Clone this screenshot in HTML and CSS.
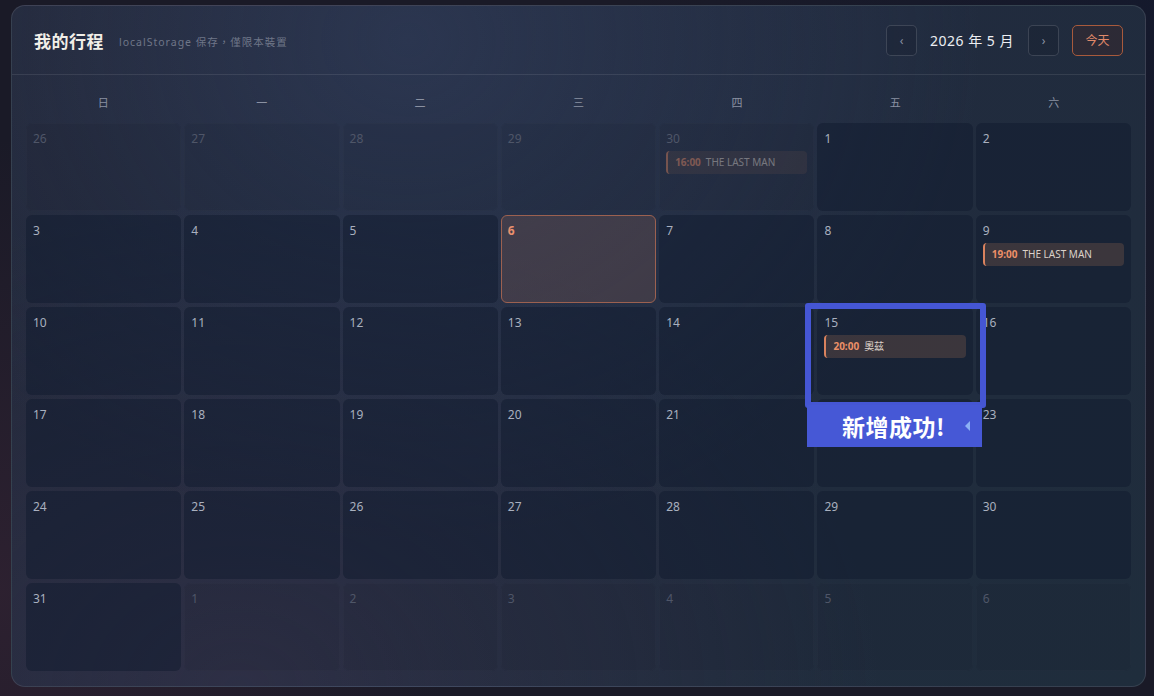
FILE: index.html
```html
<!DOCTYPE html>
<html lang="zh-Hant">
<head>
    <meta charset="UTF-8">
    <meta name="viewport" content="width=device-width, initial-scale=1.0">
    <title>我的行程</title>
    <link rel="stylesheet" href="styles.css">
</head>
<body>

    <div class="panel">
        <header class="top">
            <h1>我的行程</h1>
            <span class="sub">localStorage 保存，僅限本裝置</span>
            <div class="nav">
                <button class="nav-btn">‹</button>
                <span class="month">2026 年 5 月</span>
                <button class="nav-btn">›</button>
                <button class="today-btn">今天</button>
            </div>
        </header>

        <div class="weekdays">
            <div>日</div><div>一</div><div>二</div><div>三</div><div>四</div><div>五</div><div>六</div>
        </div>

        <div class="grid" id="grid"></div>
    </div>

    <!-- highlight + toast -->
    <div class="hl-box"></div>
    <div class="toast">新增成功!<span class="tri"></span></div>

    <script>
        var days = [];
        var prev = [26, 27, 28, 29, 30];
        var i;
        for (i = 0; i < prev.length; i++) days.push({ d: prev[i], other: true });
        for (i = 1; i <= 31; i++) days.push({ d: i });
        for (i = 1; i <= 6; i++) days.push({ d: i, other: true });

        var events = {
            4: ['16:00', 'THE LAST MAN'],
            13: ['19:00', 'THE LAST MAN'],
            19: ['20:00', '奧茲']
        };

        var grid = document.getElementById('grid');
        days.forEach(function (day, idx) {
            var cell = document.createElement('div');
            cell.className = 'cell';
            if (day.other) cell.className += ' other';
            if (!day.other && day.d === 6) cell.className += ' today';
            var html = '<div class="num">' + day.d + '</div>';
            if (events[idx]) {
                html += '<div class="chip"><b>' + events[idx][0] + '</b><span>' + events[idx][1] + '</span></div>';
            }
            cell.innerHTML = html;
            grid.appendChild(cell);
        });
    </script>

</body>
</html>
```

FILE: styles.css
```css
html, body {
    height: 100%;
}
body {
    margin: 0;
    padding: 5px 8px 9px 11px;
    box-sizing: border-box;
    font-family: "Noto Sans", "Noto Sans CJK TC", sans-serif;
    color: #c8cdd8;
    background:
        radial-gradient(circle at 0% 85%, rgba(80, 45, 65, 0.35), transparent 35%),
        radial-gradient(circle at 100% 0%, rgba(20, 25, 45, 0.9), transparent 40%),
        #1a1a27;
}
.panel {
    height: 682px;
    box-sizing: border-box;
    border: 1px solid rgba(255, 255, 255, 0.1);
    border-radius: 14px;
    background:
        radial-gradient(ellipse at 35% 5%, rgba(52, 66, 100, 0.5), transparent 55%),
        radial-gradient(ellipse at 20% 100%, rgba(60, 52, 78, 0.45), transparent 50%),
        linear-gradient(135deg, #232839 0%, #212b3e 50%, #1f2d3c 100%);
    overflow: hidden;
}
.top {
    height: 68px;
    display: flex;
    align-items: center;
    padding: 0 22px;
    border-bottom: 1px solid rgba(255, 255, 255, 0.09);
}
.top h1 {
    margin: 0;
    font-family: "Noto Sans CJK TC", sans-serif;
    font-size: 17px;
    font-weight: 700;
    color: #f2efe8;
    letter-spacing: 0.5px;
}
.sub {
    margin-left: 15px;
    margin-top: 3px;
    font-size: 10.5px;
    letter-spacing: 1px;
    color: #6f7688;
}
.nav {
    margin-left: auto;
    display: flex;
    align-items: center;
}
.nav-btn {
    width: 31px;
    height: 31px;
    padding: 0;
    border: 1px solid rgba(255, 255, 255, 0.14);
    border-radius: 5px;
    background: rgba(15, 20, 35, 0.2);
    color: #8a92a4;
    font-size: 12px;
    font-family: inherit;
}
.month {
    margin: 0 14px 0 13px;
    font-size: 14px;
    letter-spacing: 0.5px;
    color: #eceef2;
}
.today-btn {
    margin-left: 13px;
    width: 51px;
    height: 31px;
    padding: 0;
    border: 1px solid #a85a3c;
    border-radius: 5px;
    background: rgba(70, 40, 40, 0.35);
    color: #e0896a;
    font-size: 12px;
    font-family: inherit;
}
.weekdays {
    display: grid;
    grid-template-columns: repeat(7, 1fr);
    column-gap: 4px;
    padding: 20px 14px 12px;
    line-height: 16px;
    text-align: center;
    font-size: 11px;
    color: #8a91a2;
}
.grid {
    display: grid;
    grid-template-columns: repeat(7, 1fr);
    grid-template-rows: repeat(6, 88px);
    gap: 4px 3px;
    padding: 0 14px;
}
.cell {
    background: rgba(16, 26, 46, 0.5);
    border-radius: 6px;
    padding: 8px 7px;
    box-sizing: border-box;
    overflow: hidden;
}
.num {
    font-size: 12px;
    line-height: 16px;
    color: #a9b0bf;
}
.cell.other {
    background: rgba(10, 15, 30, 0.08);
    box-shadow: inset 0 0 0 1px rgba(255, 255, 255, 0.015);
}
.cell.other .num {
    color: #4f5668;
}
.cell.other .chip {
    opacity: 0.45;
}
.cell.today {
    background: rgba(120, 88, 82, 0.32);
    border: 1px solid #9c6150;
    padding: 7px 6px;
}
.cell.today .num {
    color: #e8906e;
    font-weight: 700;
}
.chip {
    margin-top: 4px;
    height: 23px;
    line-height: 23px;
    padding-left: 7px;
    border-left: 2px solid #d9825e;
    border-radius: 4px;
    background: rgba(198, 130, 90, 0.2);
    font-size: 10px;
    white-space: nowrap;
    overflow: hidden;
}
.chip b {
    color: #ec9068;
    font-weight: 700;
}
.chip span {
    margin-left: 5px;
    color: #dcd2ca;
}
.hl-box {
    position: absolute;
    left: 805px;
    top: 303px;
    width: 181px;
    height: 105px;
    box-sizing: border-box;
    border: 6px solid #4556d4;
    border-radius: 3px;
}
.toast {
    position: absolute;
    left: 807px;
    top: 405px;
    width: 175px;
    height: 42px;
    box-sizing: border-box;
    padding-right: 2px;
    background: #4658d6;
    color: #ffffff;
    font-family: "Noto Sans CJK TC", sans-serif;
    font-size: 23px;
    font-weight: 700;
    line-height: 42px;
    text-align: center;
    letter-spacing: 0.5px;
}
.tri {
    position: absolute;
    right: 12px;
    top: 16px;
    width: 0;
    height: 0;
    border-top: 5px solid transparent;
    border-bottom: 5px solid transparent;
    border-right: 5px solid #8cb0f4;
}
```
